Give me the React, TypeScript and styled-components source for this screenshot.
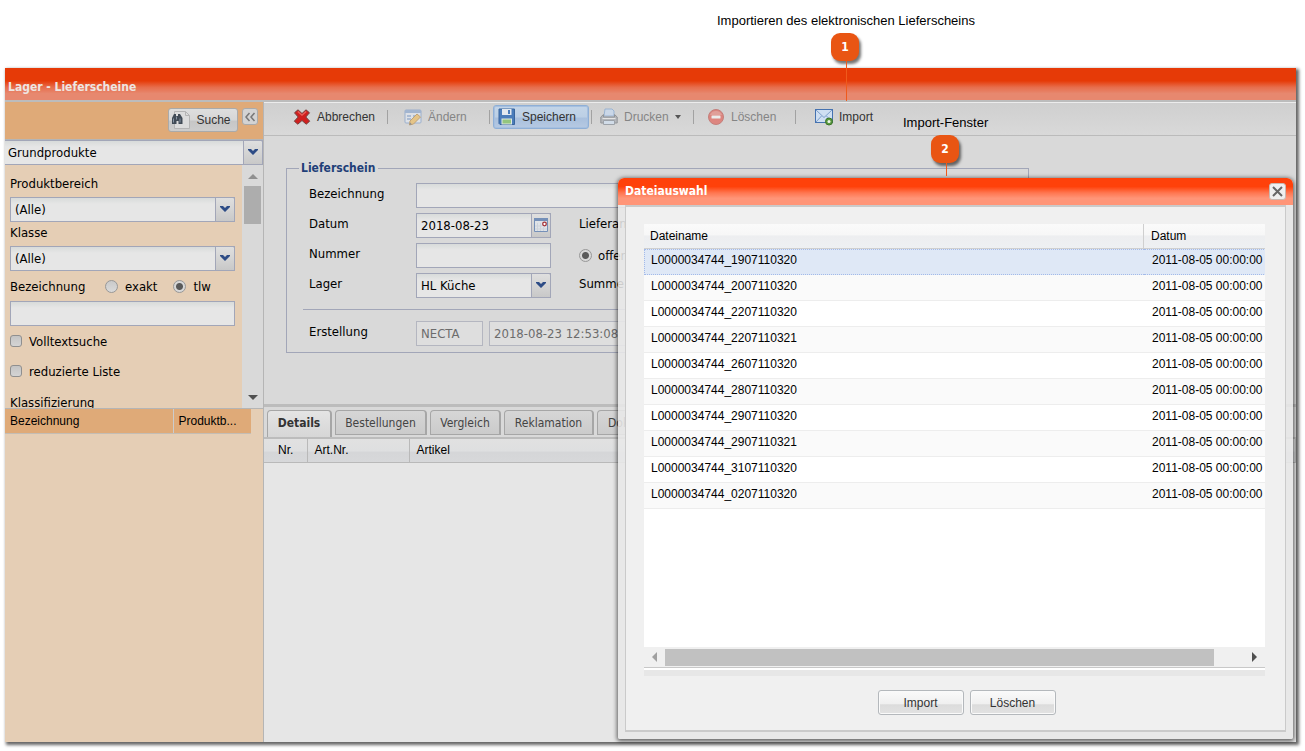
import React from "react";
import styled, { createGlobalStyle, css } from "styled-components";

const ui = '"DejaVu Sans Condensed", "DejaVu Sans", Tahoma, sans-serif';
const plain = '"Liberation Sans", Arial, sans-serif';

const GlobalStyle = createGlobalStyle`
  * { box-sizing: border-box; }
  body { margin: 0; background: #fff; font: 13px ${ui}; color: #000; }
  button, input, select { font: inherit; color: inherit; margin: 0; }
`;

const Page = styled.div`
  position: relative;
  display: flex;
  flex-direction: column;
  min-height: 100vh;
  padding: 68px 9px 9px 5px;
  overflow: hidden;
`;

/* ---------- callouts ---------- */

const Callout = styled.div<{ $x: number; $y: number }>`
  position: absolute;
  z-index: 3;
  left: ${(p) => p.$x}px;
  top: ${(p) => p.$y}px;
  display: flex;
  flex-direction: column;
  font: 13px/16px ${plain};
  white-space: nowrap;
`;

const Marker = styled.div<{ $indent: number }>`
  display: flex;
  flex-direction: column;
  align-items: center;
  width: 28px;
  margin: 4px 0 0 ${(p) => p.$indent}px;
`;

const Badge = styled.span`
  width: 28px;
  height: 28px;
  border-radius: 9px;
  background: #e95513;
  box-shadow: 2px 3px 3px rgba(0, 0, 0, 0.55);
  color: #fff;
  font: bold 12px/28px ${ui};
  text-align: center;
`;

const Leader = styled.span<{ $h: number }>`
  width: 1px;
  height: ${(p) => p.$h}px;
  margin-left: 2px;
  background: #ef5a1c;
`;

/* ---------- application window ---------- */

const Window = styled.div`
  position: relative;
  flex: 1;
  display: flex;
  flex-direction: column;
  background: #d9d9d9;
  box-shadow: 2px 2px 3px 1px rgba(0, 0, 0, 0.6);
`;

const TitleBar = styled.header`
  height: 34px;
  padding: 9px 3px 0;
  border-bottom: 2px solid #bcbcbc;
  background: linear-gradient(#e63a07 0, #e63a07 40%, #e76d4b 60%, #e7886f 80%);
  color: #eee6e2;
  font: bold 12px/20px ${ui};
`;

const Columns = styled.div`
  flex: 1;
  display: flex;
  min-height: 0;
`;

const Sidebar = styled.aside`
  display: flex;
  flex-direction: column;
  flex: none;
  width: 259px;
  border-right: 1px solid #b5b5b5;
  background: #e5ceb5;
`;

const SearchBar = styled.div`
  display: flex;
  justify-content: flex-end;
  align-items: flex-start;
  gap: 4px;
  height: 38px;
  padding: 6px 5px 0;
  border-bottom: 1px solid #b5b5b5;
  background: #dfaa78;
`;

const softButton = css`
  display: flex;
  align-items: center;
  justify-content: center;
  padding: 0;
  border: 1px solid #aaa;
  border-radius: 3px;
  font-family: ${plain};
  font-size: 12px;
  color: #333;
`;

const SearchButton = styled.button`
  ${softButton}
  gap: 6px;
  width: 70px;
  height: 24px;
  padding-right: 3px;
  background: linear-gradient(#dedede, #d6d6d6 50%, #c6c6c6 55%, #cdcdcd);
`;

const CollapseButton = styled.button`
  ${softButton}
  width: 16px;
  height: 17px;
  background: #d3d3d3;
`;

const fieldLook = css`
  height: 25px;
  border: 1px solid #a2a6b8;
  border-radius: 0;
  background: linear-gradient(#d8dbda 0, #e6e6e6 6px);
  outline: none;
  font: 13px ${ui};
`;

const TextField = styled.input<{ $width?: string; $muted?: boolean }>`
  ${fieldLook}
  flex: none;
  width: ${(p) => p.$width ?? "100%"};
  padding: 0 4px;
  ${(p) => p.$muted && css`border-color: #b4b6c0; color: #6c6c6c; background: #dedede;`}
`;

const NameField = styled(TextField)`
  flex: 1;
`;

const ComboFrame = styled.span<{ $width?: string }>`
  position: relative;
  display: block;
  flex: none;
  width: ${(p) => p.$width ?? "100%"};
`;

const ComboSelect = styled.select<{ $flush?: boolean }>`
  ${fieldLook}
  display: block;
  width: 100%;
  padding: 0 22px 0 ${(p) => (p.$flush ? 3 : 4)}px;
  appearance: none;
  ${(p) => p.$flush && css`border-left: 0;`}
`;

const Trigger = styled.span`
  position: absolute;
  top: 0;
  right: 0;
  display: flex;
  align-items: center;
  justify-content: center;
  width: 20px;
  height: 25px;
  padding-bottom: 2px;
  border: 1px solid #a2a6b8;
  border-radius: 0 2px 0 0;
  background: linear-gradient(#dfdfdf, #d2d2d2 60%, #c8c8c8);
  pointer-events: none;
`;

const FilterArea = styled.div`
  display: flex;
  height: 244px;
  border-bottom: 1px solid #b5b5b5;
  overflow: hidden;
`;

const Filters = styled.div`
  flex: 1;
  display: flex;
  flex-direction: column;
  padding: 8px 7px 0 5px;
  overflow: hidden;
`;

const FilterLabel = styled.label`
  display: block;
  flex: none;
  height: 24px;
  line-height: 22px;
`;

const ChoiceRow = styled.div`
  display: flex;
  align-items: center;
  flex: none;
  height: 30px;
`;

const Choice = styled.label<{ $gap?: number }>`
  display: flex;
  align-items: center;
  gap: ${(p) => p.$gap ?? 7}px;
  white-space: nowrap;
`;

const Caption = styled.span<{ $width: number }>`
  width: ${(p) => p.$width}px;
`;

const Radio = styled.input`
  appearance: none;
  width: 13px;
  height: 13px;
  border: 1px solid #989898;
  border-radius: 50%;
  background: linear-gradient(#c9c9c9, #dadada);
  &:checked {
    background: radial-gradient(circle, #5a5a5a 3px, #d8d8d8 4px);
  }
`;

const CheckBox = styled.input`
  appearance: none;
  width: 12px;
  height: 12px;
  border: 1px solid #8f8f8f;
  border-radius: 3px;
  background: linear-gradient(#c4c4c4, #d4d4d4);
  &:checked { background: #5a5a5a; }
`;

const CheckRow = styled(Choice)`
  flex: none;
  height: 30px;
`;

const ClippedHeading = styled.div`
  flex: none;
  line-height: 34px;
`;

const VScroll = styled.div`
  display: flex;
  flex-direction: column;
  align-items: center;
  width: 21px;
  padding: 9px 0 8px;
  background: #d9d9d9;
`;

const VThumb = styled.span`
  width: 17px;
  height: 38px;
  margin: 7px 0 auto;
  background: #adadad;
`;

const ListHead = styled.table`
  width: 246px;
  border-collapse: collapse;
  table-layout: fixed;
  font: 12px/24px ${plain};
  background: #dfaa78;
  th { font-weight: normal; text-align: left; padding: 0 5px; border-bottom: 1px solid #c4bdb4; }
  th:first-child { width: 168px; border-right: 1px solid #ccc; }
`;

/* ---------- main area ---------- */

const Main = styled.main`
  flex: 1;
  display: flex;
  flex-direction: column;
  min-width: 0;
`;

const Toolbar = styled.div`
  display: flex;
  align-items: center;
  height: 34px;
  padding: 0 0 4px 25px;
  border-top: 1px solid #ececec;
  border-bottom: 1px solid #bbb;
  background: linear-gradient(#cfcfcf, #d9d9d9);
`;

const ToolButton = styled.button<{ $width: number; $pressed?: boolean }>`
  display: flex;
  align-items: center;
  gap: 6px;
  flex: none;
  width: ${(p) => p.$width}px;
  height: 24px;
  padding: 0 3px;
  border: 1px solid transparent;
  border-radius: 3px;
  background: none;
  font: 12px ${plain};
  color: #333;
  &:disabled { color: #858585; }
  &:disabled > svg:first-child { opacity: 0.55; }
  ${(p) => p.$pressed && css`
    padding: 0 4px;
    border-color: #8fafd6;
    box-shadow: inset 0 0 0 1px #a6c0e0;
    background: linear-gradient(#c3d5e8, #bccfe5 50%, #a9c0dd 55%, #b6c9e2);
  `}
`;

const Divider = styled.span<{ $before?: number; $after: number }>`
  width: 1px;
  height: 14px;
  margin: 0 ${(p) => p.$after}px 0 ${(p) => p.$before ?? 0}px;
  background: #a2a2a2;
`;

const FormArea = styled.div`
  height: 271px;
  padding: 23px 22px 0;
  border-bottom: 3px solid #bcbcbc;
`;

const FormSet = styled.fieldset`
  width: 743px;
  height: 194px;
  margin: 0;
  padding: 6px 16px 0;
  border: 1px solid #a2a6b8;
`;

const Legend = styled.legend`
  margin-left: -4px;
  padding: 0 3px 0 2px;
  font: bold 12px/18px ${ui};
  color: #1f3f78;
`;

const FormRow = styled.div`
  display: flex;
  align-items: flex-start;
  height: 30px;
  padding-left: 6px;
`;

const FieldLabel = styled.label<{ $width: number }>`
  flex: none;
  width: ${(p) => p.$width}px;
  line-height: 22px;
`;

const DateFrame = styled.span`
  position: relative;
  width: 135px;
  margin-right: 28px;
`;

const StateChoice = styled(Choice)`
  height: 25px;
  margin-left: 28px;
`;

const SumLabel = styled.label`
  margin-left: 28px;
  line-height: 22px;
`;

const Rule = styled.hr`
  height: 1px;
  margin: 6px 0 11px;
  border: 0;
  background: #a2a6b8;
`;

const CreatedField = styled.span`
  display: flex;
  gap: 6px;
`;

const Tabs = styled.div`
  display: flex;
  align-items: flex-start;
  gap: 3px;
  height: 32px;
  padding: 3px 3px 0;
  border-bottom: 2px solid #bcbcbc;
`;

const Tab = styled.button<{ $width: number; $active?: boolean }>`
  flex: none;
  width: ${(p) => p.$width}px;
  height: 25px;
  padding: 0;
  border: 1px solid #a6a6a6;
  border-width: 1px 2px 1px 1px;
  border-radius: 4px 4px 0 0;
  background: linear-gradient(#d6d6d6, #cbcbcb);
  font: 12px ${ui};
  color: #444;
  ${(p) => p.$active && css`
    height: 27px;
    padding-bottom: 2px;
    border-bottom: 0;
    background: linear-gradient(#e4e4e4, #d6d6d6);
    font-weight: bold;
    color: #333;
  `}
`;

const CoveredTab = styled(Tab)`
  padding-left: 10px;
  text-align: left;
`;

const Items = styled.div`
  flex: 1;
  background: #e6e6e6;
`;

const ItemTable = styled.table`
  width: 100%;
  table-layout: fixed;
  border-collapse: collapse;
  background: linear-gradient(#e1e1e1, #dedfe0 50%, #d5d6d8 55%, #d7d8da);
  font: 12px/23px ${plain};
  th { padding: 0 7px; border-bottom: 1px solid #b9b9b9; border-right: 1px solid #b9b9b9; font-weight: normal; text-align: left; }
  th:first-child { width: 43px; padding-left: 14px; }
  th:nth-child(2) { width: 102px; }
`;

/* ---------- dialog ---------- */

const Dialog = styled.section`
  position: absolute;
  top: 110px;
  right: 3px;
  bottom: 3px;
  z-index: 2;
  display: flex;
  flex-direction: column;
  width: 675px;
  border-radius: 6px 6px 2px 2px;
  background: rgba(232, 232, 232, 0.88);
  box-shadow: 0 1px 4px 1px rgba(0, 0, 0, 0.6);
`;

const DialogTitle = styled.header`
  display: flex;
  justify-content: space-between;
  height: 27px;
  padding: 5px 7px 0;
  border-radius: 6px 6px 0 0;
  background: linear-gradient(#ff410a 0, #ff410a 32%, #ff7650 55%, #ff9578 75%);
`;

const DialogHeading = styled.h2`
  margin: 0;
  font: bold 12px/17px ${ui};
  color: #fff;
`;

const CloseButton = styled.button`
  ${softButton}
  width: 17px;
  height: 17px;
  border-color: #c9b9b2;
  background: #efefef;
`;

const DialogPanel = styled.div`
  flex: 1;
  display: flex;
  flex-direction: column;
  margin: 0 7px 7px;
  padding: 17px 20px 0 18px;
  border: 1px solid #cacaca;
  border-top-width: 2px;
  border-bottom-width: 2px;
  background: #f0f0f0;
`;

const FileList = styled.div`
  height: 423px;
  overflow: hidden;
  background: #fff;
`;

const FileTable = styled.table`
  width: 660px;
  min-width: 100%;
  table-layout: fixed;
  border-collapse: separate;
  border-spacing: 0;
  font: 12px/16px ${plain};
  th, td { height: 26px; padding: 0 7px 4px; text-align: left; font-weight: normal; white-space: nowrap; }
  th { height: 25px; padding: 0 6px; border-bottom: 1px solid #cfcfcf; background: linear-gradient(#fafafa, #f7f7f7 45%, #edeef0 50%, #eef0f2); }
  th:first-child { width: 500px; border-right: 1px solid #cfcfcf; }
  th + th { padding-left: 7px; }
  td + td { padding-left: 8px; }
  td { border-bottom: 1px solid #ededed; }
  tr:nth-child(even) td { background: #fafafa; }
  tr[aria-selected="true"] td { background: #dfe8f6; border-top: 1px dotted #a3bae9; border-bottom: 1px dotted #a3bae9; }
  tr[aria-selected="true"] td:first-child { border-left: 1px dotted #a3bae9; padding-left: 6px; }
`;

const HScroll = styled.div`
  display: flex;
  align-items: center;
  flex: none;
  height: 21px;
  padding: 0 8px;
  border-bottom: 1px solid #c8c8c8;
`;

const HThumb = styled.span`
  flex: 1;
  height: 17px;
  margin: 0 38px 0 8px;
  background: #c1c1c1;
`;

const ListFoot = styled.div`
  flex: none;
  height: 8px;
  border-top: 2px solid #fff;
  background: #e7e7e7;
`;

const Actions = styled.div`
  display: flex;
  justify-content: center;
  gap: 6px;
  margin: 14px 0 0 24px;
`;

const ActionButton = styled.button`
  ${softButton}
  width: 86px;
  height: 25px;
  border-color: #b4b8bc;
  background: linear-gradient(#fafafa, #f0f0f0 55%, #dcdcdc 60%, #e2e2e2);
  box-shadow: inset 0 0 0 1px #fafafa;
`;

/* ---------- drawings ---------- */

const Chevron = () => (
  <svg width="10" height="6" viewBox="0 0 10 6" aria-hidden="true">
    <path d="M0 0h3l2 2 2-2h3v1L5 6 0 1z" fill="#2d4c86" />
  </svg>
);

const Arrow = ({ dir, color = "#505050" }: { dir: "up" | "down" | "left" | "right"; color?: string }) => {
  const flat = dir === "up" || dir === "down";
  const shapes = { up: "M0 5 5 0l5 5z", down: "M0 0h10L5 5z", left: "M5 0v10L0 5z", right: "M0 0v10l5-5z" };
  return (
    <svg width={flat ? 10 : 5} height={flat ? 5 : 10} aria-hidden="true">
      <path d={shapes[dir]} fill={color} />
    </svg>
  );
};

const Glyph = styled.svg`
  flex: none;
`;

const Icon = ({ children }: { children: React.ReactNode }) => (
  <Glyph width="18" height="18" viewBox="0 0 18 18" aria-hidden="true">
    {children}
  </Glyph>
);

const FindIcon = () => (
  <Icon>
    <path d="M2.500 .5h11l4 4v13h-15z" fill="#dcdcdc" stroke="#b4b4b4" />
    <path d="M13.500 .5v4h4" fill="none" stroke="#b4b4b4" />
    <path d="M2 3h2v2h2V3h2l2.500 4v6H6.500v-3h-2v3H0V7z" fill="#414b56" />
    <path d="M1.500 7.500v4M8 7.500v4M4.500 5.500v3" stroke="#8794a3" />
  </Icon>
);

const CancelIcon = () => (
  <Icon>
    <path d="M5 1.800 9 5.500l4-3.700 3.500 3L12.800 9l3.900 4.200-3.500 3L9 12.500l-4.200 3.700-3.500-3L5.200 9 1.500 4.800z" fill="#d0201f" stroke="#74403e" strokeLinejoin="round" />
    <path d="M4.800 3.500 9 7.200l4.200-3.700" fill="none" stroke="#ea625c" strokeWidth="1.300" />
  </Icon>
);

const EditIcon = () => (
  <Icon>
    <rect x="1" y="2" width="16" height="13" rx="1" fill="#e6edf7" stroke="#6f93c8" />
    <path d="M1 2h16v3H1z" fill="#7c9fd0" />
    <path d="M3 8h4M3 11h4M9 8h5" stroke="#6f93c8" strokeWidth="1.500" />
    <path d="m6 13 7-7 3.500 3-7 7L5.500 17z" fill="#f3b84a" stroke="#b07b2c" />
    <path d="m5.500 17 .5-2.500 2 1.700z" fill="#555" />
  </Icon>
);

const SaveIcon = () => (
  <Icon>
    <path d="M1 1h15.500v15.500H2L1 15.500z" fill="#4a7cba" stroke="#39659d" />
    <path d="M4 1h9.500v6H4z" fill="#e2e8ef" />
    <path d="M10 2h2v4h-2z" fill="#4a7cba" />
    <path d="M3.500 10.500h10.500v6H3.500z" fill="#dfe8e0" />
    <path d="M4.500 11.500h8.500v4H4.500z" fill="#93c57e" />
  </Icon>
);

const PrintIcon = () => (
  <Icon>
    <path d="M5 1h7l2 2v5H4z" fill="#c4dcfa" stroke="#6e9bd2" />
    <path d="M3.500 6.500 .8 9v6h16.400V9l-2.700-2.500V9h-11z" fill="#9a9fa6" stroke="#5d636b" />
    <path d="M3.500 12.500h11v4h-11z" fill="#cfe2f8" stroke="#707a86" />
    <path d="M2.500 10.500h13" stroke="#f2f2f2" />
  </Icon>
);

const RemoveIcon = () => (
  <Icon>
    <circle cx="9" cy="9" r="7.500" fill="#e5463b" stroke="#b73c35" />
    <path d="M3 7a6.500 6.500 0 0 1 12 0z" fill="#f08a80" opacity=".7" />
    <rect x="4.500" y="7.500" width="9" height="3" rx=".5" fill="#fff" />
  </Icon>
);

const MailIcon = () => (
  <Icon>
    <rect x=".5" y="1.500" width="17" height="13" fill="#cfdff2" stroke="#4572b0" />
    <path d="m1 2 8 7.500L17 2M1 14l5.500-6M17 14l-5.500-6" fill="none" stroke="#7d9fcb" />
    <circle cx="14" cy="13.500" r="3.500" fill="#5a9a3f" stroke="#3c7327" />
    <circle cx="14" cy="13.500" r="1.500" fill="#f0f6ec" />
  </Icon>
);

const CalendarIcon = () => (
  <svg width="14" height="14" viewBox="0 0 14 14" aria-hidden="true">
    <path d="M.500 1.500h13v12H.500z" fill="#dfe3e8" stroke="#7590b8" />
    <path d="M0 0h14v3H0z" fill="#7590b8" />
    <path d="M3.500 5v8M6.500 5v8M1 8h7M1 11h12M9.500 9v4" stroke="#cdd3db" />
    <circle cx="10.500" cy="6" r="1.800" fill="#fff" stroke="#a33238" strokeWidth="1.300" />
  </svg>
);

const Combo = ({ id, value, width, flush, label }: { id: string; value: string; width?: string; flush?: boolean; label?: string }) => (
  <ComboFrame $width={width}>
    <ComboSelect id={id} $flush={flush} aria-label={label}>
      <option>{value}</option>
    </ComboSelect>
    <Trigger><Chevron /></Trigger>
  </ComboFrame>
);

const files = [
  "L0000034744_1907110320",
  "L0000034744_2007110320",
  "L0000034744_2207110320",
  "L0000034744_2207110321",
  "L0000034744_2607110320",
  "L0000034744_2807110320",
  "L0000034744_2907110320",
  "L0000034744_2907110321",
  "L0000034744_3107110320",
  "L0000034744_0207110320",
];

const tabs = [
  { name: "Details", width: 65 },
  { name: "Bestellungen", width: 92 },
  { name: "Vergleich", width: 71 },
  { name: "Reklamation", width: 90 },
];

export default function App() {
  return (
    <Page>
      <GlobalStyle />
      <Callout $x={717} $y={13}>
        Importieren des elektronischen Lieferscheins
        <Marker $indent={114}>
          <Badge>1</Badge>
          <Leader $h={40} />
        </Marker>
      </Callout>
      <Callout $x={903} $y={115}>
        Import-Fenster
        <Marker $indent={28}>
          <Badge>2</Badge>
          <Leader $h={13} />
        </Marker>
      </Callout>

      <Window>
        <TitleBar>Lager - Lieferscheine</TitleBar>
        <Columns>
          <Sidebar>
            <SearchBar>
              <SearchButton><FindIcon />Suche</SearchButton>
              <CollapseButton aria-label="Einklappen">
                <svg width="12" height="10" viewBox="0 0 12 10" fill="none" stroke="#777" strokeWidth="1.500">
                  <path d="M5.500 1 2 5l3.500 4M10.500 1 7 5l3.500 4" />
                </svg>
              </CollapseButton>
            </SearchBar>
            <Combo id="group" value="Grundprodukte" flush label="Produktgruppe" />
            <FilterArea>
              <Filters>
                <FilterLabel htmlFor="area">Produktbereich</FilterLabel>
                <Combo id="area" value="(Alle)" />
                <FilterLabel htmlFor="class">Klasse</FilterLabel>
                <Combo id="class" value="(Alle)" />
                <ChoiceRow>
                  <Caption $width={95}>Bezeichnung</Caption>
                  <Choice><Radio type="radio" name="match" />exakt</Choice>
                  <Caption $width={16} />
                  <Choice><Radio type="radio" name="match" defaultChecked />tlw</Choice>
                </ChoiceRow>
                <TextField aria-label="Bezeichnung" />
                <CheckRow><CheckBox type="checkbox" />Volltextsuche</CheckRow>
                <CheckRow><CheckBox type="checkbox" />reduzierte Liste</CheckRow>
                <ClippedHeading>Klassifizierung</ClippedHeading>
              </Filters>
              <VScroll>
                <Arrow dir="up" color="#909090" />
                <VThumb />
                <Arrow dir="down" />
              </VScroll>
            </FilterArea>
            <ListHead>
              <thead><tr><th>Bezeichnung</th><th>Produktb...</th></tr></thead>
            </ListHead>
          </Sidebar>

          <Main>
            <Toolbar>
              <ToolButton $width={98}><CancelIcon />Abbrechen</ToolButton>
              <Divider $after={12} />
              <ToolButton $width={89} disabled><EditIcon />Ändern</ToolButton>
              <Divider $after={3} />
              <ToolButton $width={96} $pressed><SaveIcon />Speichern</ToolButton>
              <Divider $before={2} $after={4} />
              <ToolButton $width={97} disabled><PrintIcon />Drucken
                <svg width="6" height="4" aria-hidden="true"><path d="M0 0h6L3 4z" fill="#555" /></svg>
              </ToolButton>
              <Divider $after={9} />
              <ToolButton $width={92} disabled><RemoveIcon />Löschen</ToolButton>
              <Divider $after={15} />
              <ToolButton $width={70}><MailIcon />Import</ToolButton>
            </Toolbar>
            <FormArea>
              <FormSet>
                <Legend>Lieferschein</Legend>
                <FormRow>
                  <FieldLabel htmlFor="name" $width={107}>Bezeichnung</FieldLabel>
                  <NameField id="name" />
                </FormRow>
                <FormRow>
                  <FieldLabel htmlFor="date" $width={107}>Datum</FieldLabel>
                  <DateFrame>
                    <TextField id="date" defaultValue="2018-08-23" />
                    <Trigger><CalendarIcon /></Trigger>
                  </DateFrame>
                  <FieldLabel as="span" $width={80}>Lieferant</FieldLabel>
                </FormRow>
                <FormRow>
                  <FieldLabel htmlFor="number" $width={107}>Nummer</FieldLabel>
                  <TextField id="number" $width="135px" />
                  <StateChoice $gap={6}><Radio type="radio" name="state" defaultChecked />offen</StateChoice>
                </FormRow>
                <FormRow>
                  <FieldLabel htmlFor="store" $width={107}>Lager</FieldLabel>
                  <Combo id="store" value="HL Küche" width="135px" />
                  <SumLabel as="span">Summe</SumLabel>
                </FormRow>
                <Rule />
                <FormRow>
                  <FieldLabel htmlFor="creator" $width={107}>Erstellung</FieldLabel>
                  <CreatedField>
                    <TextField id="creator" $width="67px" $muted readOnly defaultValue="NECTA" />
                    <TextField aria-label="Erstellungszeit" $width="160px" $muted readOnly defaultValue="2018-08-23 12:53:08" />
                  </CreatedField>
                </FormRow>
              </FormSet>
            </FormArea>
            <Tabs role="tablist">
              {tabs.map((t, i) => (
                <Tab key={t.name} role="tab" aria-selected={i === 0} $width={t.width} $active={i === 0}>{t.name}</Tab>
              ))}
              <CoveredTab role="tab" $width={60}>Dok</CoveredTab>
            </Tabs>
            <Items>
              <ItemTable>
                <thead><tr><th>Nr.</th><th>Art.Nr.</th><th>Artikel</th></tr></thead>
              </ItemTable>
            </Items>
          </Main>
        </Columns>

        <Dialog role="dialog" aria-labelledby="dialog-title">
          <DialogTitle>
            <DialogHeading id="dialog-title">Dateiauswahl</DialogHeading>
            <CloseButton aria-label="Schließen">
              <svg width="11" height="11" viewBox="0 0 11 11" stroke="#666" strokeWidth="2">
                <path d="m1 1 9 9M10 1l-9 9" />
              </svg>
            </CloseButton>
          </DialogTitle>
          <DialogPanel>
            <FileList>
              <FileTable>
                <thead><tr><th>Dateiname</th><th>Datum</th></tr></thead>
                <tbody>
                  {files.map((f, i) => (
                    <tr key={f} aria-selected={i === 0}><td>{f}</td><td>2011-08-05 00:00:00</td></tr>
                  ))}
                </tbody>
              </FileTable>
            </FileList>
            <HScroll>
              <Arrow dir="left" color="#a0a0a0" />
              <HThumb />
              <Arrow dir="right" />
            </HScroll>
            <ListFoot />
            <Actions>
              <ActionButton>Import</ActionButton>
              <ActionButton>Löschen</ActionButton>
            </Actions>
          </DialogPanel>
        </Dialog>
      </Window>
    </Page>
  );
}
